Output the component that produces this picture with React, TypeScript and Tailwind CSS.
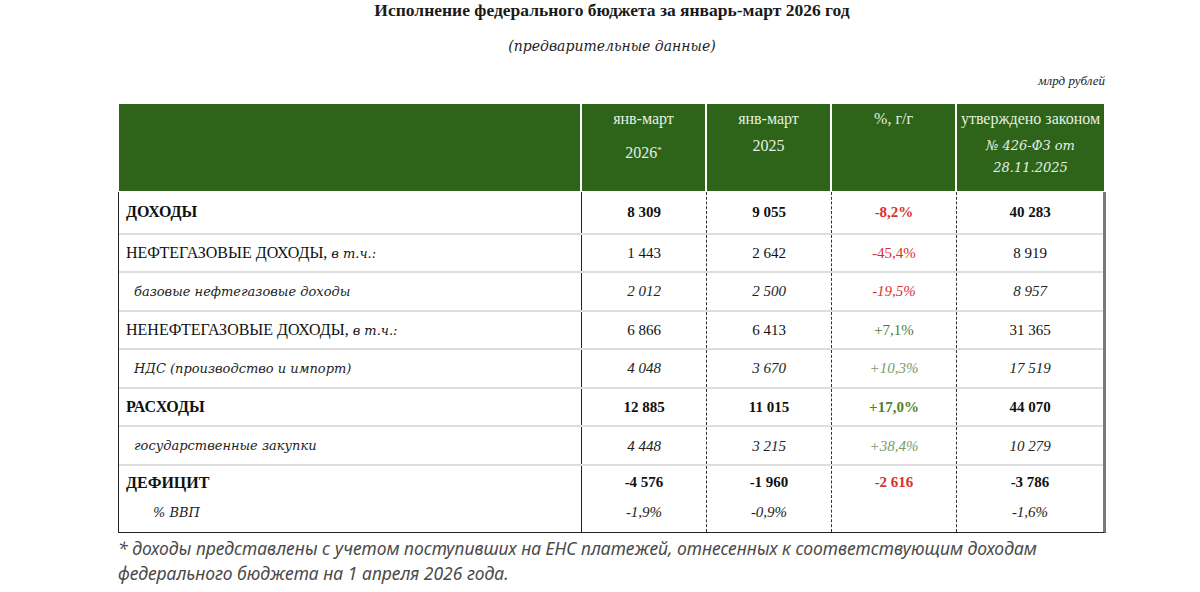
const serif = "font-['Liberation_Serif','Times_New_Roman',serif]"
const italicSerif = "font-['DejaVu_Serif',serif] italic"

type Row = {
  label: React.ReactNode
  values: [string, string, string, string]
  kind: 'bold' | 'plain' | 'italic'
  pct: 'red' | 'green' | 'lightgreen'
  first?: boolean
}

const rows: Row[] = [
  { label: 'ДОХОДЫ', values: ['8 309', '9 055', '-8,2%', '40 283'], kind: 'bold', pct: 'red', first: true },
  {
    label: (
      <span>
        НЕФТЕГАЗОВЫЕ ДОХОДЫ, <span className={`${italicSerif} text-[13px]`}>в т.ч.:</span>
      </span>
    ),
    values: ['1 443', '2 642', '-45,4%', '8 919'],
    kind: 'plain',
    pct: 'red',
  },
  { label: 'базовые нефтегазовые доходы', values: ['2 012', '2 500', '-19,5%', '8 957'], kind: 'italic', pct: 'red' },
  {
    label: (
      <span>
        НЕНЕФТЕГАЗОВЫЕ ДОХОДЫ, <span className={`${italicSerif} text-[13px]`}>в т.ч.:</span>
      </span>
    ),
    values: ['6 866', '6 413', '+7,1%', '31 365'],
    kind: 'plain',
    pct: 'green',
  },
  { label: 'НДС (производство и импорт)', values: ['4 048', '3 670', '+10,3%', '17 519'], kind: 'italic', pct: 'lightgreen' },
  { label: 'РАСХОДЫ', values: ['12 885', '11 015', '+17,0%', '44 070'], kind: 'bold', pct: 'green' },
  { label: 'государственные закупки', values: ['4 448', '3 215', '+38,4%', '10 279'], kind: 'italic', pct: 'lightgreen' },
]

const pctColor = {
  red: 'text-[#d9302c]',
  green: 'text-[#4f7f2c]',
  lightgreen: 'text-[#7c9a68]',
}

const dashed = 'border-r border-dashed border-[#333]'

function DataRow({ row }: { row: Row }) {
  const numCls =
    row.kind === 'bold'
      ? `${serif} font-bold text-[15px]`
      : row.kind === 'italic'
        ? `${serif} italic text-[15px]`
        : `${serif} text-[15px]`
  const labelCls =
    row.kind === 'bold'
      ? `${serif} font-bold text-[16px] pl-[7px] text-[#111]`
      : row.kind === 'italic'
        ? `${italicSerif} text-[13px] pl-[15px] text-[#222]`
        : `${serif} text-[16px] pl-[7px] text-[#111]`
  return (
    <div
      className={`grid grid-cols-[463px_125px_125px_125px_1fr] ${row.first ? 'h-[41px]' : 'h-[38.6px] border-t-2 border-[#dedede]'}`}
    >
      <div className={`flex items-center border-r border-[#222] ${labelCls}`}>{row.label}</div>
      {row.values.map((v, i) => (
        <div
          key={i}
          className={`flex items-center justify-center ${i < 3 ? dashed : ''} ${numCls} ${
            i === 2 ? pctColor[row.pct] : row.kind === 'italic' ? 'text-[#222]' : 'text-[#111]'
          }`}
        >
          {v}
        </div>
      ))}
    </div>
  )
}

export default function App() {
  return (
    <div className="w-[1200px] h-[592px] bg-white overflow-hidden">
      <h1 className={`${serif} font-bold text-[17.5px] leading-[20px] text-center text-[#1a1a1a] pl-[24px]`}>
        Исполнение федерального бюджета за январь-март 2026 год
      </h1>
      <p className={`${italicSerif} text-[14px] text-center text-[#222] mt-[16px] pl-[24px]`}>(предварительные данные)</p>
      <p className={`${serif} italic text-[13px] text-right text-[#222] mt-[14px] pr-[95px]`}>млрд рублей</p>

      <div className={`ml-[119px] mt-[13px] w-[985px] grid grid-cols-[463px_125px_125px_125px_1fr] h-[87px] text-[#e7efe1] ${serif} text-[16px] leading-[20px]`}>
        <div className="bg-[#2d6419] border-r-2 border-white" />
        <div className="bg-[#2d6419] border-r-2 border-white flex flex-col items-center pt-[5px]">
          <span>янв-март</span>
          <span className="mt-[14px]">
            2026<sup className="text-[9px] relative -top-[5px]">*</sup>
          </span>
        </div>
        <div className="bg-[#2d6419] border-r-2 border-white flex flex-col items-center pt-[5px]">
          <span>янв-март</span>
          <span className="mt-[7px]">2025</span>
        </div>
        <div className="bg-[#2d6419] border-r-2 border-white flex flex-col items-center pt-[5px]">
          <span>%, г/г</span>
        </div>
        <div className="bg-[#2d6419] flex flex-col items-center pt-[5px]">
          <span>утверждено законом</span>
          <span className={`${italicSerif} text-[13px] mt-[7px]`}>№ 426-ФЗ от</span>
          <span className={`${italicSerif} text-[13px] mt-[2px]`}>28.11.2025</span>
        </div>
      </div>

      <div className="ml-[118px] mt-[1px] w-[988px] border-l border-[#222] border-r-[3px] border-r-[#7a7a7a] border-b border-b-[#222]">
        {rows.map((r, i) => (
          <DataRow key={i} row={r} />
        ))}
        <div className="grid grid-cols-[463px_125px_125px_125px_1fr] h-[68px] border-t-2 border-[#dedede]">
          <div className="flex flex-col border-r border-[#222] pt-[5px]">
            <span className={`${serif} font-bold text-[16px] pl-[7px] text-[#111]`}>ДЕФИЦИТ</span>
            <span className={`${italicSerif} text-[13px] pl-[34px] mt-[8px] text-[#222]`}>% ВВП</span>
          </div>
          {[
            ['-4 576', '-1,9%'],
            ['-1 960', '-0,9%'],
            ['-2 616', ''],
            ['-3 786', '-1,6%'],
          ].map(([a, b], i) => (
            <div key={i} className={`flex flex-col items-center pt-[5px] ${i < 3 ? dashed : ''}`}>
              <span className={`${serif} font-bold text-[15px] ${i === 2 ? 'text-[#d9302c]' : 'text-[#111]'}`}>{a}</span>
              <span className={`${serif} italic text-[15px] mt-[7px] text-[#222]`}>{b}</span>
            </div>
          ))}
        </div>
      </div>

      <div className="ml-[118px] mt-[3px] font-['Noto_Sans',sans-serif] italic text-[17.5px] leading-[25px] text-[#4a4a4a]">
        <p>* доходы представлены с учетом поступивших на ЕНС платежей, отнесенных к соответствующим доходам</p>
        <p>федерального бюджета на 1 апреля 2026 года.</p>
      </div>
    </div>
  )
}
